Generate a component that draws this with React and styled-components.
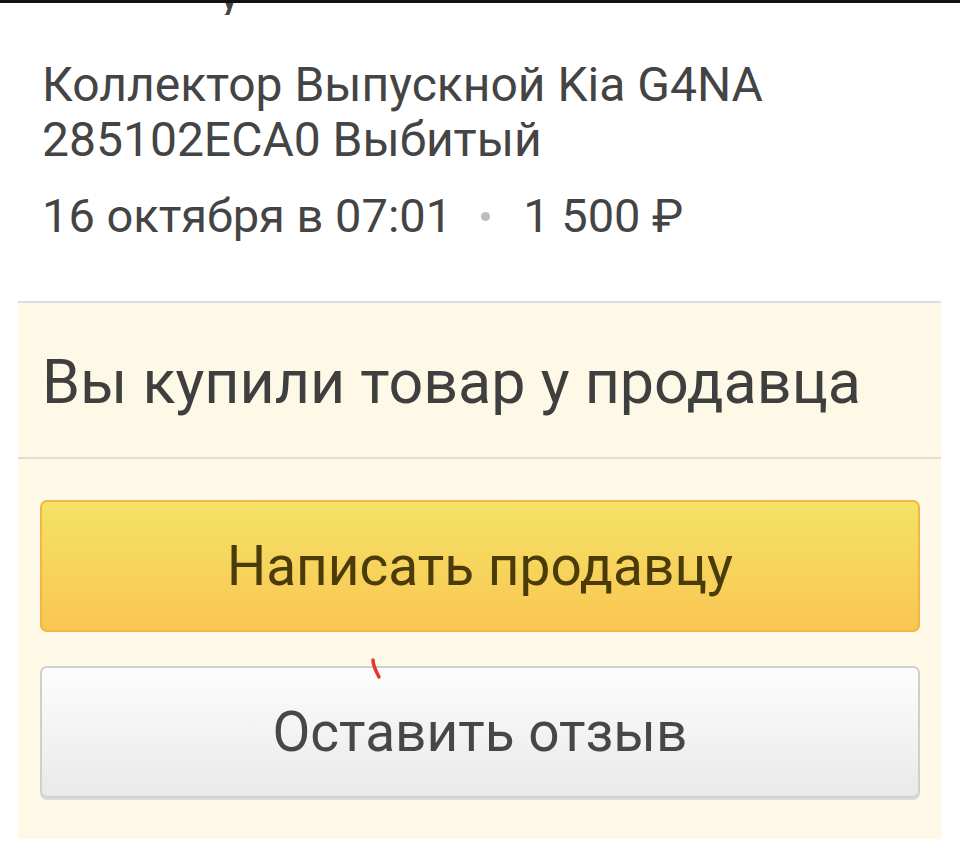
import React from 'react';
import styled, { createGlobalStyle } from 'styled-components';

const GlobalStyle = createGlobalStyle`
  html, body {
    margin: 0;
    padding: 0;
    background: #ffffff;
  }
  body {
    font-family: Roboto, "Noto Sans", "Liberation Sans", sans-serif;
    color: #444444;
  }
`;

const Page = styled.div`
  width: 960px;
  height: 851px;
  overflow: hidden;
  border-top: 3px solid #111;
  box-sizing: border-box;
`;

// tail of the row above, cut by the top edge
const CutLine = styled.div`
  height: 12px;
  overflow: hidden;
  padding-left: 218px;
  font-size: 48px;
  line-height: 1;
  color: #444;

  span {
    display: block;
    margin-top: -34px;
  }
`;

const Info = styled.div`
  padding: 42px 42px 0;
`;

const Title = styled.h1`
  margin: 0;
  font-weight: 400;
  font-size: 48px;
  line-height: 55px;
  color: #444;
`;

const Meta = styled.div`
  display: flex;
  align-items: center;
  margin-top: 24px;
  font-size: 47px;
  line-height: 50px;
  color: #444;
`;

const Dot = styled.span`
  width: 9px;
  height: 9px;
  border-radius: 50%;
  background: #bdbdbd;
  margin: 0 33px 0 29px;
`;

const Panel = styled.section`
  position: relative;
  margin: 60px 19px 0 18px;
  height: 536px;
  background: #fef8e6;
  border-top: 2px solid #dddddd;
`;

const PanelHead = styled.div`
  height: 156px;
  box-sizing: border-box;
  padding: 47px 0 0 24px;
  border-bottom: 2px solid #dddddd;
`;

const Heading = styled.h2`
  margin: 0;
  font-weight: 400;
  font-size: 61px;
  line-height: 64px;
  color: #3f3f3f;
`;

const Actions = styled.div`
  display: flex;
  flex-direction: column;
  gap: 34px;
  padding: 41px 21px 0 22px;
`;

const Button = styled.button`
  height: 132px;
  width: 100%;
  border-radius: 7px;
  font-family: Roboto, "Noto Sans", "Liberation Sans", sans-serif;
  font-size: 55px;
  font-weight: 400;
  cursor: pointer;
  border: 2px solid ${p => (p.$primary ? '#f6b444' : '#cfcfcf')};
  background: ${p =>
    p.$primary
      ? 'linear-gradient(#f4e266, #f9c653)'
      : 'linear-gradient(#fdfdfd, #e9e9e9)'};
  color: ${p => (p.$primary ? '#4a3b08' : '#474747')};
  box-shadow: ${p => (p.$primary ? 'none' : '0 2px 0 #dcdcdc')};
`;

const Scribble = styled.svg`
  position: absolute;
  left: 352px;
  top: 355px;
`;

export default function App() {
  return (
    <>
      <GlobalStyle />
      <Page>
        <CutLine><span>у</span></CutLine>
        <Info>
          <Title>Коллектор Выпускной Kia G4NA<br />285102ECA0 Выбитый</Title>
          <Meta>
            <span>16 октября в 07:01</span>
            <Dot />
            <span>1 500 ₽</span>
          </Meta>
        </Info>
        <Panel>
          <PanelHead>
            <Heading>Вы купили товар у продавца</Heading>
          </PanelHead>
          <Actions>
            <Button $primary>Написать продавцу</Button>
            <Button>Оставить отзыв</Button>
          </Actions>
          <Scribble width="14" height="24" viewBox="0 0 14 24">
            <path d="M3 2 C3 8 6 13 9 19" stroke="#e8362a" strokeWidth="3.5" fill="none" strokeLinecap="round" />
          </Scribble>
        </Panel>
      </Page>
    </>
  );
}
